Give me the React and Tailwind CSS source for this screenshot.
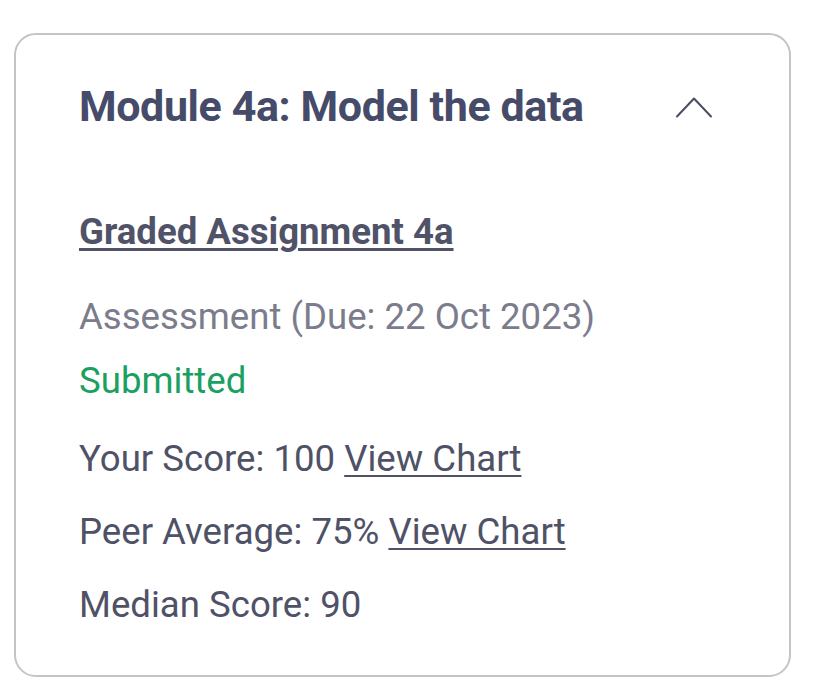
function ScoreLine({ label, value, chart }) {
  return (
    <p className="text-[36.6px] leading-[44px] text-[#4f5267]">
      {label}: {value}
      {chart && (
        <>
          {' '}
          <a href="#" className="underline underline-offset-[4px] decoration-[2px]">
            View Chart
          </a>
        </>
      )}
    </p>
  );
}

export default function App() {
  return (
    <div className="min-h-screen bg-white px-[14px] pt-[33px] font-['Roboto',sans-serif]">
      <div className="h-[644px] w-[777px] rounded-[22px] border-2 border-[#c4c4c4] bg-white pl-[63px] pr-[76px]">
        <div className="flex items-center justify-between pt-[46px]">
          <h2 className="text-[43px] font-bold leading-[50px] tracking-[-0.4px] text-[#454b68]">
            Module 4a: Model the data
          </h2>
          <svg width="38" height="22" viewBox="0 0 38 22" fill="none" className="mt-[2px]">
            <polyline
              points="2,20.5 19,2.5 36,20.5"
              stroke="#4a4e62"
              strokeWidth="2"
              strokeLinecap="round"
              strokeLinejoin="round"
            />
          </svg>
        </div>

        <a
          href="#"
          className="mt-[79px] block text-[36.6px] font-bold leading-[44px] text-[#505368] underline underline-offset-[4px] decoration-[3px]"
        >
          Graded Assignment 4a
        </a>

        <p className="mt-[41px] text-[36.6px] leading-[44px] text-[#7b7c8c]">
          Assessment (Due: 22 Oct 2023)
        </p>
        <p className="mt-[20px] text-[36.6px] leading-[44px] text-[#1ba062]">Submitted</p>

        <div className="mt-[34px] flex flex-col gap-[29px]">
          <ScoreLine label="Your Score" value="100" chart />
          <ScoreLine label="Peer Average" value="75%" chart />
          <ScoreLine label="Median Score" value="90" />
        </div>
      </div>
    </div>
  );
}
